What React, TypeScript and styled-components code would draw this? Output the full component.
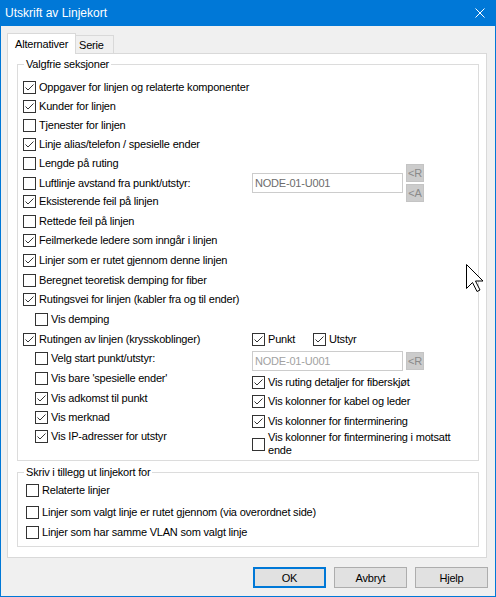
import React from 'react';
import styled, { createGlobalStyle } from 'styled-components';

const Global = createGlobalStyle`
  html, body { margin: 0; padding: 0; background: #ffffff; }
  body { font-family: "Liberation Sans", Arial, sans-serif; font-size: 11px; letter-spacing: -0.2px; color: #000; }
  * { box-sizing: border-box; }
`;

const Window = styled.div`
  position: relative;
  width: 496px;
  height: 597px;
  background: #f0f0f0;
  border: 1px solid #0078d7;
  border-top: none;
  display: flex;
  flex-direction: column;
  overflow: hidden;
`;

const TitleBar = styled.div`
  height: 26px;
  flex: none;
  background: #0078d7;
  color: #ffffff;
  display: flex;
  align-items: center;
  justify-content: space-between;
  padding: 0 10px 0 4px;
  font-size: 12px;
  letter-spacing: 0;
`;

const Body = styled.div`
  flex: 1;
  display: flex;
  flex-direction: column;
  padding: 7px 7px 0 6px;
`;

const TabStrip = styled.div`
  display: flex;
  align-items: flex-end;
  height: 20px;
  position: relative;
  z-index: 1;
`;

const Tab = styled.div<{ $active?: boolean; $w: number }>`
  width: ${p => p.$w}px;
  height: ${p => (p.$active ? 21 : 18)}px;
  margin-bottom: ${p => (p.$active ? -1 : 0)}px;
  background: ${p => (p.$active ? '#ffffff' : '#f0f0f0')};
  border: 1px solid #d9d9d9;
  border-bottom: none;
  border-left: ${p => (p.$active ? '1px solid #d9d9d9' : 'none')};
  padding-left: ${p => (p.$active ? 7 : 3)}px;
  display: flex;
  align-items: center;
  padding-bottom: ${p => (p.$active ? 1 : 0)}px;
`;

const Panel = styled.div`
  width: 480px;
  height: 505px;
  background: #ffffff;
  border: 1px solid #d9d9d9;
  padding: 4px 0 0 9px;
  display: flex;
  flex-direction: column;
`;

const Group = styled.fieldset<{ $h: number; $mt?: number }>`
  margin: ${p => p.$mt ?? 0}px 0 0 0;
  width: 462px;
  height: ${p => p.$h}px;
  border: 1px solid #dcdcdc;
  padding: 0;
  min-width: 0;
`;

const Legend = styled.legend`
  margin-left: 6px;
  padding: 0 2px;
  line-height: 13px;
  font-size: 11px;
`;

const Content = styled.div<{ $pt: number; $pl: number }>`
  display: flex;
  flex-direction: column;
  padding: ${p => p.$pt}px 0 0 ${p => p.$pl}px;
`;

const Row = styled.div<{ $h: number; $indent?: number }>`
  display: flex;
  align-items: center;
  height: ${p => p.$h}px;
  padding-left: ${p => p.$indent ?? 0}px;
`;

const SplitRow = styled.div<{ $h: number }>`
  display: grid;
  grid-template-columns: 229px auto auto;
  justify-content: start;
  align-items: center;
  height: ${p => p.$h}px;
`;

const PairRow = styled.div`
  display: grid;
  grid-template-columns: 61px auto;
  align-items: center;
  height: 19px;
`;

const Item = styled.label`
  display: flex;
  align-items: center;
  gap: 3px;
  line-height: 13px;
  white-space: nowrap;
`;

const Text = styled.span<{ $w?: number }>`
  white-space: ${p => (p.$w ? 'normal' : 'nowrap')};
  width: ${p => (p.$w ? `${p.$w}px` : 'auto')};
`;

const Box = styled.span`
  width: 13px;
  height: 13px;
  flex: none;
  border: 1px solid #333333;
  background: #ffffff;
  display: flex;
`;

const Columns = styled.div`
  display: grid;
  grid-template-columns: 229px 1fr;
`;

const Column = styled.div`
  display: flex;
  flex-direction: column;
`;

const FieldWrap = styled.div`
  display: flex;
  align-items: center;
  gap: 3px;
`;

const TextField = styled.div<{ $dim?: boolean }>`
  width: 151px;
  height: 20px;
  border: 1px solid #cccccc;
  background: #ffffff;
  color: ${p => (p.$dim ? '#a2a2a2' : '#6d6d6d')};
  padding-left: 2px;
  display: flex;
  align-items: center;
`;

const BtnStack = styled.div`
  display: flex;
  flex-direction: column;
  gap: 2px;
  margin: -10px 0 -10px 3px;
`;

const SmallBtn = styled.div`
  width: 18px;
  height: 18px;
  background: #cccccc;
  border: 1px solid #c4c4c4;
  color: #8a8a8a;
  display: flex;
  align-items: center;
  justify-content: center;
  font-size: 11px;
`;

const Footer = styled.div`
  display: flex;
  justify-content: flex-end;
  gap: 8px;
  margin-top: 9px;
`;

const Button = styled.div<{ $default?: boolean }>`
  width: 73px;
  height: 21px;
  background: #e1e1e1;
  border: ${p => (p.$default ? '2px solid #0078d7' : '1px solid #adadad')};
  display: flex;
  align-items: center;
  justify-content: center;
`;

const Cursor = styled.svg`
  position: absolute;
  left: 465px;
  top: 264px;
`;

const Check = ({ on }: { on?: boolean }) => (
  <Box>
    {on && (
      <svg width="11" height="11" viewBox="0 0 11 11">
        <path d="M1.5 5.5 L4 8 L9.5 2.5" stroke="#333333" strokeWidth="1" fill="none" />
      </svg>
    )}
  </Box>
);

const CheckItem = ({ label, on, w }: { label: string; on?: boolean; w?: number }) => (
  <Item>
    <Check on={on} />
    <Text $w={w}>{label}</Text>
  </Item>
);

type Opt = { label: string; on?: boolean; h: number; indent?: number };

const upper: Opt[] = [
  { label: 'Oppgaver for linjen og relaterte komponenter', on: true, h: 19 },
  { label: 'Kunder for linjen', on: true, h: 19 },
  { label: 'Tjenester for linjen', h: 18 },
  { label: 'Linje alias/telefon / spesielle ender', on: true, h: 20 },
  { label: 'Lengde på ruting', h: 19 },
  { label: 'Luftlinje avstand fra punkt/utstyr:', h: 18 },
  { label: 'Eksisterende feil på linjen', on: true, h: 20 },
  { label: 'Rettede feil på linjen', h: 20 },
  { label: 'Feilmerkede ledere som inngår i linjen', on: true, h: 19 },
  { label: 'Linjer som er rutet gjennom denne linjen', on: true, h: 20 },
  { label: 'Beregnet teoretisk demping for fiber', h: 20 },
  { label: 'Rutingsvei for linjen (kabler fra og til ender)', on: true, h: 19 },
  { label: 'Vis demping', h: 21, indent: 12 },
];

const lowerLeft: Opt[] = [
  { label: 'Rutingen av linjen (krysskoblinger)', on: true, h: 19 },
  { label: 'Velg start punkt/utstyr:', h: 19, indent: 12 },
  { label: "Vis bare 'spesielle ender'", h: 20, indent: 12 },
  { label: 'Vis adkomst til punkt', on: true, h: 20, indent: 12 },
  { label: 'Vis merknad', on: true, h: 19, indent: 12 },
  { label: 'Vis IP-adresser for utstyr', on: true, h: 19, indent: 12 },
];

const lowerRight: Opt[] = [
  { label: 'Vis ruting detaljer for fiberskjøt', on: true, h: 20 },
  { label: 'Vis kolonner for kabel og leder', on: true, h: 19 },
  { label: 'Vis kolonner for finterminering', on: true, h: 21 },
];

const extra: Opt[] = [
  { label: 'Relaterte linjer', h: 21 },
  { label: 'Linjer som valgt linje er rutet gjennom (via overordnet side)', h: 22 },
  { label: 'Linjer som har samme VLAN som valgt linje', h: 19 },
];

export default function App() {
  return (
    <>
      <Global />
      <Window>
        <TitleBar>
          <span>Utskrift av Linjekort</span>
          <svg width="10" height="10" viewBox="0 0 10 10">
            <path d="M0.5 0.5 L9.5 9.5 M9.5 0.5 L0.5 9.5" stroke="#ffffff" strokeWidth="1" />
          </svg>
        </TitleBar>
        <Body>
          <TabStrip>
            <Tab $active $w={69}>Alternativer</Tab>
            <Tab $w={38}>Serie</Tab>
          </TabStrip>
          <Panel>
            <Group $h={403}>
              <Legend>Valgfrie seksjoner</Legend>
              <Content $pt={7} $pl={5}>
                {upper.map((o, i) =>
                  i === 5 ? (
                    <SplitRow key={o.label} $h={o.h}>
                      <CheckItem label={o.label} on={o.on} />
                      <TextField>NODE-01-U001</TextField>
                      <BtnStack>
                        <SmallBtn>&lt;R</SmallBtn>
                        <SmallBtn>&lt;A</SmallBtn>
                      </BtnStack>
                    </SplitRow>
                  ) : (
                    <Row key={o.label} $h={o.h} $indent={o.indent}>
                      <CheckItem label={o.label} on={o.on} />
                    </Row>
                  )
                )}
                <Columns>
                  <Column>
                    {lowerLeft.map(o => (
                      <Row key={o.label} $h={o.h} $indent={o.indent}>
                        <CheckItem label={o.label} on={o.on} />
                      </Row>
                    ))}
                  </Column>
                  <Column>
                    <PairRow>
                      <CheckItem label="Punkt" on />
                      <CheckItem label="Utstyr" on />
                    </PairRow>
                    <Row $h={23}>
                      <FieldWrap>
                        <TextField $dim>NODE-01-U001</TextField>
                        <SmallBtn>&lt;R</SmallBtn>
                      </FieldWrap>
                    </Row>
                    {lowerRight.map(o => (
                      <Row key={o.label} $h={o.h}>
                        <CheckItem label={o.label} on={o.on} />
                      </Row>
                    ))}
                    <Row $h={24}>
                      <CheckItem label="Vis kolonner for finterminering i motsatt ende" w={192} />
                    </Row>
                  </Column>
                </Columns>
              </Content>
            </Group>
            <Group $h={81} $mt={5}>
              <Legend>Skriv i tillegg ut linjekort for</Legend>
              <Content $pt={1} $pl={8}>
                {extra.map(o => (
                  <Row key={o.label} $h={o.h}>
                    <CheckItem label={o.label} on={o.on} />
                  </Row>
                ))}
              </Content>
            </Group>
          </Panel>
          <Footer>
            <Button $default>OK</Button>
            <Button>Avbryt</Button>
            <Button>Hjelp</Button>
          </Footer>
        </Body>
        <Cursor width="18" height="28" viewBox="0 0 18 28">
          <path
            d="M0.5 0.5 L0.5 24.5 L6.5 18.5 L11 27.5 L14 26 L9.5 17 L17 17 Z"
            fill="#ffffff"
            stroke="#000000"
            strokeWidth="1"
            strokeLinejoin="miter"
          />
        </Cursor>
      </Window>
    </>
  );
}
